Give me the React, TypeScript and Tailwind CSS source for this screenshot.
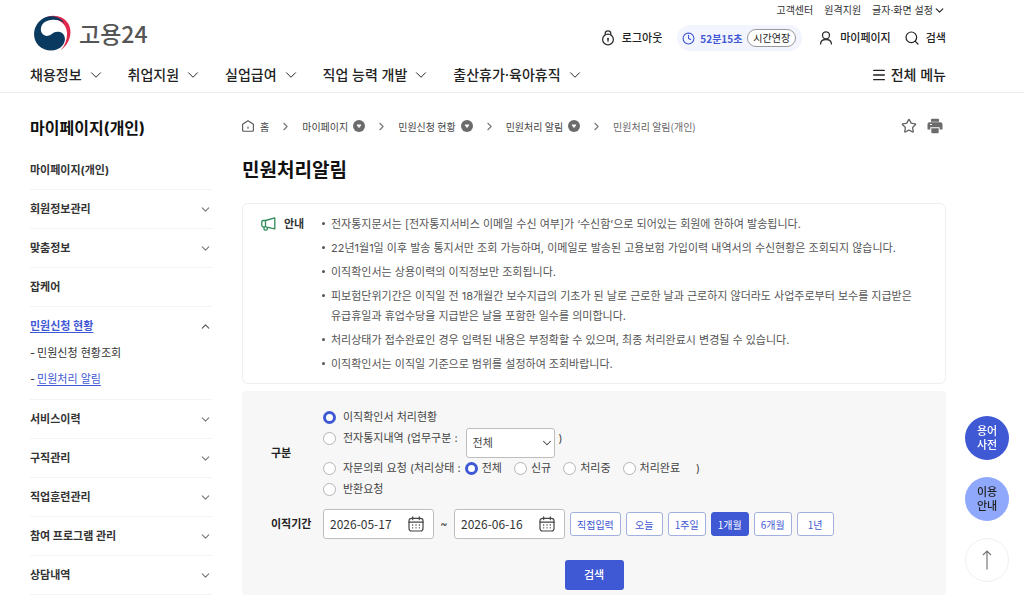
import React, { useState } from 'react';
import { ChevronDown, ChevronRight, ChevronUp, Clock, Menu, Search, Star } from 'lucide-react';

const MAIN_MENU = ['채용정보', '취업지원', '실업급여', '직업 능력 개발', '출산휴가·육아휴직'];

interface SideItem {
  label: string;
  expandable?: boolean;
  children?: string[];
}

const SIDE_ITEMS: SideItem[] = [
  { label: '마이페이지(개인)' },
  { label: '회원정보관리', expandable: true },
  { label: '맞춤정보', expandable: true },
  { label: '잡케어' },
  { label: '민원신청 현황', expandable: true, children: ['민원신청 현황조회', '민원처리 알림'] },
  { label: '서비스이력', expandable: true },
  { label: '구직관리', expandable: true },
  { label: '직업훈련관리', expandable: true },
  { label: '참여 프로그램 관리', expandable: true },
  { label: '상담내역', expandable: true },
];

const CRUMBS = ['마이페이지', '민원신청 현황', '민원처리 알림'];

const NOTICES = [
  '전자통지문서는 [전자통지서비스 이메일 수신 여부]가 ‘수신함’으로 되어있는 회원에 한하여 발송됩니다.',
  '22년1월1일 이후 발송 통지서만 조회 가능하며, 이메일로 발송된 고용보험 가입이력 내역서의 수신현황은 조회되지 않습니다.',
  '이직확인서는 상용이력의 이직정보만 조회됩니다.',
  '피보험단위기간은 이직일 전 18개월간 보수지급의 기초가 된 날로 근로한 날과 근로하지 않더라도 사업주로부터 보수를 지급받은 유급휴일과 휴업수당을 지급받은 날을 포함한 일수를 의미합니다.',
  '처리상태가 접수완료인 경우 입력된 내용은 부정확할 수 있으며, 최종 처리완료시 변경될 수 있습니다.',
  '이직확인서는 이직일 기준으로 범위를 설정하여 조회바랍니다.',
];

const STATUSES = ['전체', '신규', '처리중', '처리완료'];
const PERIODS = ['직접입력', '오늘', '1주일', '1개월', '6개월', '1년'];

const Logo = () => (
  <a href="#" className="flex items-center gap-[7px] font-['Noto_Sans_CJK_KR',sans-serif]">
    <svg width="38" height="36" viewBox="0 0 38 36" aria-hidden="true">
      <path d="M7 6C14-2 29-1 34.500 9c4.500 9 1 20-8 26.500C33 28 35 18 31 11 26 3 14 2 7 6Z" fill="#e0294b" />
      <path
        d="M30.500 8.500C26 1 15-1 7.500 4.500-1 11-2.500 23 4.500 30.500c7 7 18.500 6.500 24 0 4-4.500 3-12-2.500-13.500-4-1-6.500.5-9 2.500-4 3-9 1-10-3.500C6 9.500 11 5.500 17 5c5-.5 10 0 13.500 3.500Z"
        fill="#0b3a60"
      />
    </svg>
    <span className="text-[23px] leading-[30px] font-medium text-[#555]">고용24</span>
  </a>
);

const LockIcon = () => (
  <svg width="14" height="16" viewBox="0 0 14 16" fill="none" stroke="#333" strokeWidth="1.3" aria-hidden="true">
    <circle cx="7" cy="9.500" r="5.400" />
    <path d="M4.200 5V3.600a2.800 2.800 0 0 1 5.600 0V5M7 9v2.800" />
    <circle cx="7" cy="8.700" r="1" fill="#333" stroke="none" />
  </svg>
);

const UserIcon = () => (
  <svg width="14" height="14" viewBox="0 0 14 14" fill="none" stroke="#333" strokeWidth="1.3" aria-hidden="true">
    <circle cx="7" cy="4.300" r="3.500" />
    <path d="M1.500 13.500c0-3.200 2.300-5 5.500-5s5.500 1.800 5.500 5" />
  </svg>
);

const HomeIcon = () => (
  <svg width="12" height="12" viewBox="0 0 12 12" fill="none" stroke="#555" strokeWidth="1.100" aria-hidden="true">
    <path d="M.6 4.300 6 .7l5.400 3.600v6a1 1 0 0 1-1 1H1.600a1 1 0 0 1-1-1ZM6 6.500v2.300" strokeLinejoin="round" />
  </svg>
);

const CrumbToggle = ({ label }: { label: string }) => (
  <button type="button" aria-label={`${label} 메뉴 열기`}>
    <svg width="12" height="12" viewBox="0 0 12 12">
      <circle cx="6" cy="6" r="6" fill="#6b6b6b" />
      <path d="M4 4.900h4L6 7.600Z" fill="#fff" stroke="#fff" strokeWidth=".8" strokeLinejoin="round" />
    </svg>
  </button>
);

const PrinterIcon = () => (
  <svg width="16" height="16" viewBox="0 0 16 16" aria-hidden="true">
    <path d="M5 .8h6a1 1 0 0 1 1 1v2H4v-2a1 1 0 0 1 1-1Z" fill="#6b6b6b" />
    <path d="M2.500 4.300h11A2 2 0 0 1 15.500 6.300v5.200h-2.800V9.300H3.300v2.200H.5V6.300a2 2 0 0 1 2-2Z" fill="#6b6b6b" />
    <path d="M4.300 10.300h7.400v4a1 1 0 0 1-1 1H5.300a1 1 0 0 1-1-1Z" fill="#6b6b6b" />
    <path d="M3 6.500h2" stroke="#fff" />
  </svg>
);

const MegaphoneIcon = () => (
  <svg width="15" height="14" viewBox="0 0 15 14" fill="none" stroke="#2f8a57" strokeWidth="1.300" strokeLinejoin="round" aria-hidden="true">
    <path d="M4.500 3.500 13.800.9v11L4.500 9.800M4.500 3.500H2.200A1.500 1.500 0 0 0 .8 5v3.200c0 .9.6 1.600 1.400 1.600h2.300ZM4.500 3.500v6.300M3 9.800v2.300c0 .7.500 1.100 1.200 1.100h1c.7 0 1.100-.5 1.100-1.100V10.300" />
  </svg>
);

const CalendarIcon = () => (
  <svg width="16" height="16" viewBox="0 0 16 16" fill="none" stroke="#444" strokeWidth="1.200" strokeLinecap="round" aria-hidden="true">
    <rect x="1" y="2.300" width="14" height="12.700" rx="2.500" />
    <path d="M1 6.200h14M4.700.8v2.800M11.300.8v2.800" />
    <path d="M4.600 9h.1M8 9h.1M11.300 9h.1M4.600 11.800h.1M8 11.800h.1M11.300 11.800h.1" strokeWidth="1.300" />
  </svg>
);

interface RadioProps {
  name: string;
  label: string;
  checked: boolean;
  onChange: () => void;
  className?: string;
}

const Radio: React.FC<RadioProps> = ({ name, label, checked, onChange, className }) => (
  <label className={`flex h-[21px] items-center ${className}`}>
    <input
      type="radio"
      name={name}
      checked={checked}
      onChange={onChange}
      className="h-[13px] w-[13px] shrink-0 appearance-none rounded-full border border-[#b5b5b5] bg-white checked:border-3 checked:border-[#3f58d4]"
    />
    {label}
  </label>
);

const DateField = ({ label, defaultValue }: { label: string; defaultValue: string }) => (
  <div className="flex h-[30px] w-[111px] items-center justify-between rounded-[3px] border border-[#bdbdbd] bg-white pr-[9px] pl-1.5">
    <input
      type="text"
      aria-label={label}
      defaultValue={defaultValue}
      className="w-[72px] font-['Noto_Sans_CJK_KR',sans-serif] text-xs text-[#333] outline-none"
    />
    <button type="button" aria-label={`${label} 달력`}>
      <CalendarIcon />
    </button>
  </div>
);

const Header = () => (
  <header className="border-b border-[#ebebeb] pr-[78px] pl-[30px]">
    <div className="flex h-[57px] justify-between">
      <div className="flex items-center pt-2 pl-1">
        <Logo />
      </div>
      <div className="flex flex-col items-end gap-[5px]">
        <div className="flex h-5 items-center gap-[11px] text-[10px] text-[#333]">
          <a href="#">고객센터</a>
          <a href="#">원격지원</a>
          <button type="button" className="flex items-center">
            글자·화면 설정 <ChevronDown size={13} strokeWidth={2.5} />
          </button>
        </div>
        <div className="flex h-[26px] items-center text-[11px] font-medium text-[#222]">
          <a href="#" className="flex items-center gap-[7px]">
            <LockIcon /> 로그아웃
          </a>
          <div className="mr-[17px] ml-[15px] flex h-[26px] items-center rounded-full bg-[#f2f4fe] pr-1.5 pl-[5px] font-['Noto_Sans_CJK_KR',sans-serif] text-[10px]">
            <Clock size={13} className="text-[#3f58d4]" />
            <span className="mx-[5px] font-bold text-[#3f58d4]">52분15초</span>
            <button type="button" className="h-[18px] rounded-full border border-[#999] bg-white px-[5px] leading-4 font-normal">
              시간연장
            </button>
          </div>
          <a href="#" className="flex items-center gap-[7px]">
            <UserIcon /> 마이페이지
          </a>
          <a href="#" className="ml-[13px] flex items-center gap-1.5">
            <Search size={16} strokeWidth={1.8} /> 검색
          </a>
        </div>
      </div>
    </div>
    <nav className="flex h-[35px] items-center justify-between pt-px text-sm font-medium text-[#222]">
      <ul className="flex gap-[23px]">
        {MAIN_MENU.map((menu) => (
          <li key={menu}>
            <button type="button" className="flex items-center gap-[5px]">
              {menu} <ChevronDown size={18} strokeWidth={1.3} />
            </button>
          </li>
        ))}
      </ul>
      <button type="button" className="flex items-center gap-1">
        <Menu size={16} /> 전체 메뉴
      </button>
    </nav>
  </header>
);

const Sidebar = () => (
  <aside className="w-[182px] shrink-0">
    <h2 className="pt-[25px] pb-[13px] text-base leading-5 font-bold text-[#111]">마이페이지(개인)</h2>
    <ul className="text-[11px] text-[#333]">
      {SIDE_ITEMS.map(({ label, expandable, children }) => (
        <li key={label} className="border-b border-[#f3f3f3]">
          <a
            href="#"
            className={`flex h-[38px] items-center justify-between font-bold ${children ? 'text-[#3f58d4] underline underline-offset-2' : ''}`}
          >
            {label}
            {expandable && (children
              ? <ChevronUp size={13} className="text-[#555]" />
              : <ChevronDown size={13} className="text-[#777]" />)}
          </a>
          {children && (
            <ul className="flex flex-col gap-2.5 pb-3 leading-4">
              {children.map((child, i) => (
                <li key={child} className="flex gap-0.5">
                  <span>-</span>
                  <a href="#" className={i === 1 ? 'text-[#3f58d4] underline underline-offset-2' : ''}>{child}</a>
                </li>
              ))}
            </ul>
          )}
        </li>
      ))}
    </ul>
  </aside>
);

const SearchForm = () => {
  const [kind, setKind] = useState(0);
  const [status, setStatus] = useState('전체');
  const [period, setPeriod] = useState('1개월');

  return (
    <form className="mt-[7px] flex-1 rounded bg-[#f7f7f7] pt-4 pb-[5px] pl-[29px] text-[11px] text-[#444]">
      <fieldset className="flex items-center">
        <div className="w-[52px] font-bold text-[#222]">구분</div>
        <div>
          <Radio name="kind" label="이직확인서 처리현황" checked={kind === 0} onChange={() => setKind(0)} className="gap-[7px]" />
          <div className="flex h-[30px] items-start">
            <Radio name="kind" label="전자통지내역 (업무구분 :" checked={kind === 1} onChange={() => setKind(1)} className="mr-2 gap-[7px]" />
            <div className="relative">
              <select aria-label="업무구분" className="h-[30px] w-[89px] appearance-none rounded-[3px] border border-[#bdbdbd] bg-white pl-1.5">
                <option>전체</option>
              </select>
              <ChevronDown size={14} strokeWidth={1.8} className="pointer-events-none absolute top-2 right-px" />
            </div>
            <span className="ml-1 leading-[21px]">)</span>
          </div>
          <div className="flex items-center">
            <Radio name="kind" label="자문의뢰 요청 (처리상태 :" checked={kind === 2} onChange={() => setKind(2)} className="mr-1 gap-[7px]" />
            <div className="flex gap-3">
              {STATUSES.map((s) => (
                <Radio key={s} name="status" label={s} checked={status === s} onChange={() => setStatus(s)} className="gap-1" />
              ))}
            </div>
            <span className="ml-4">)</span>
          </div>
          <Radio name="kind" label="반환요청" checked={kind === 3} onChange={() => setKind(3)} className="gap-[7px]" />
        </div>
      </fieldset>
      <div className="mt-[9px] flex items-center">
        <div className="w-[52px] font-bold text-[#222]">이직기간</div>
        <DateField label="시작일" defaultValue="2026-05-17" />
        <span className="w-5 text-center">~</span>
        <DateField label="종료일" defaultValue="2026-06-16" />
        <div className="ml-[5px] flex gap-[5px] font-['Noto_Sans_CJK_KR',sans-serif]">
          {PERIODS.map((p) => (
            <button
              key={p}
              type="button"
              onClick={() => setPeriod(p)}
              className={`h-6 min-w-[37px] rounded-[3px] border px-1.5 text-[10px] ${
                period === p ? 'border-[#3f58d4] bg-[#3f58d4] text-white' : 'border-[#a3b0df] bg-white text-[#3f58d4]'
              }`}
            >
              {p}
            </button>
          ))}
        </div>
      </div>
      <div className="mt-[21px] flex justify-center pr-[29px]">
        <button type="submit" className="h-[30px] w-[59px] rounded-[3px] bg-[#3f58d4] font-medium text-white">검색</button>
      </div>
    </form>
  );
};

export default function App() {
  return (
    <div className="flex min-h-screen flex-col bg-white font-[Inter,'Noto_Sans_CJK_KR',sans-serif]">
      <Header />
      <div className="flex flex-1 gap-[30px] pr-[78px] pl-[30px]">
        <Sidebar />
        <main className="flex min-w-0 flex-1 flex-col">
          <div className="mt-[23px] flex h-5 items-center justify-between">
            <nav className="flex items-center font-['Noto_Sans_CJK_KR',sans-serif] text-[10px] text-[#444]">
              <a href="#" className="flex items-center gap-1.5"><HomeIcon /> 홈</a>
              {CRUMBS.map((crumb) => (
                <React.Fragment key={crumb}>
                  <ChevronRight size={13} className="mx-2.5 text-[#777]" />
                  <a href="#" className="mr-[5px]">{crumb}</a>
                  <CrumbToggle label={crumb} />
                </React.Fragment>
              ))}
              <ChevronRight size={13} className="mx-2.5 text-[#777]" />
              <span className="text-[#666]">민원처리 알림(개인)</span>
            </nav>
            <div className="flex gap-2.5 pr-[3px] text-[#666]">
              <button type="button" aria-label="즐겨찾기"><Star size={16} strokeWidth={2} /></button>
              <button type="button" aria-label="인쇄"><PrinterIcon /></button>
            </div>
          </div>
          <h1 className="mt-[22px] mb-[19px] text-[19px] leading-[26px] font-bold text-[#111]">민원처리알림</h1>
          <section className="flex rounded-md border border-[#efefef] pt-2.5 pr-5 pb-[9px] pl-[18px] text-[11px] leading-5 text-[#555]">
            <h2 className="flex h-5 w-[61px] shrink-0 items-center gap-2 font-bold text-[#333]"><MegaphoneIcon /> 안내</h2>
            <ul className="flex flex-col gap-1">
              {NOTICES.map((notice) => (
                <li key={notice} className="flex gap-1.5 break-keep">
                  <span className="mt-2 h-[3px] w-[3px] shrink-0 rounded-full bg-[#555]" />
                  {notice}
                </li>
              ))}
            </ul>
          </section>
          <SearchForm />
        </main>
      </div>
      <div className="fixed right-[15px] bottom-[13px] flex flex-col gap-[17px] text-[11px] leading-[14px] font-medium">
        <button type="button" className="h-11 w-11 rounded-full bg-[#3f58d4] text-white">용어<br />사전</button>
        <button type="button" className="h-11 w-11 rounded-full bg-[#8fa8fb] text-[#222]">이용<br />안내</button>
        <button type="button" aria-label="맨 위로" className="flex h-11 w-11 items-center justify-center rounded-full border border-[#efefef] bg-white">
          <svg width="10" height="20" viewBox="0 0 10 20" fill="none" stroke="#777" strokeWidth="1.200">
            <path d="M5 19.500V1M1 5l4-4 4 4" />
          </svg>
        </button>
      </div>
    </div>
  );
}
